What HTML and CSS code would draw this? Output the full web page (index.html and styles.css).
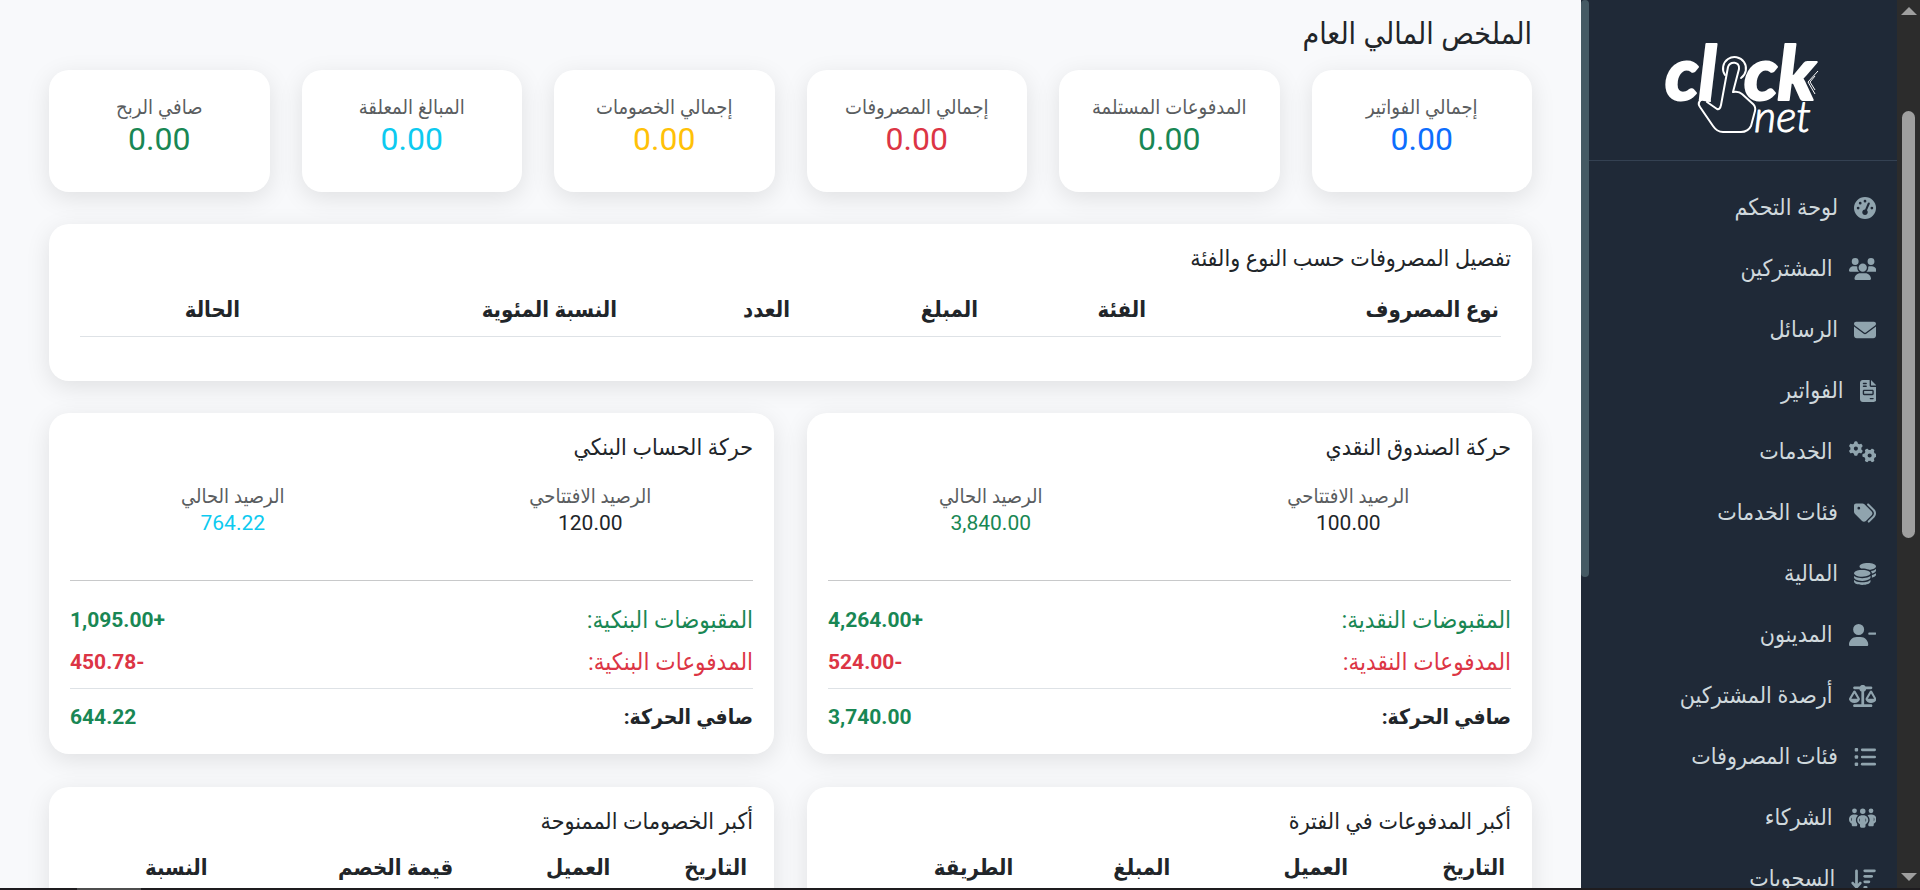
FILE: index.html
```html
<!DOCTYPE html>
<html lang="ar" dir="rtl">
<head>
  <meta charset="UTF-8">
  <meta name="viewport" content="width=device-width, initial-scale=1">
  <title>الملخص المالي العام</title>
  <link rel="stylesheet" href="styles.css">
</head>
<body>
  <div class="layout">
    <div class="page-scroll" aria-hidden="true">
      <svg class="scroll-arrow" viewBox="0 0 16 8"><path d="M8 0l8 8H0z"/></svg>
      <div class="scroll-track"><div class="page-thumb"></div></div>
      <svg class="scroll-arrow" viewBox="0 0 16 8"><path d="M0 0h16L8 8z"/></svg>
    </div>

    <aside class="sidebar">
      <div class="side-content">
        <a href="#" class="logo" aria-label="click net">
          <svg viewBox="0 0 165 105" direction="ltr">
            <text class="logo-bold" x="4" y="65">cl</text>
            <text class="logo-bold" x="83" y="65">ck</text>
            <path class="logo-line" d="M49 66 L43 65 C39 64 36 68 39 72 L52 91 Q56 97 62 97 H80 Q87 97 90 91 L94 76 Q95 72 92 69 L81 59 Q78 56 72 57 L78 34 C79 26 69 26 67 32 L60 70 Q59 75 56 74 L46 67"/>
            <path class="logo-ring" d="M64 40 A11.5 11.5 0 1 1 80 43"/>
            <text class="logo-light" x="93" y="97">net</text>
            <path class="logo-thin" d="M157 36 L147 47 L154 59 M154 41 L149 47 L154 55"/>
          </svg>
        </a>
        <nav class="menu">
          <a href="#"><svg viewBox="0 0 512 512"><path d="M0 256a256 256 0 1 1 512 0A256 256 0 1 1 0 256zM288 96a32 32 0 1 0 -64 0 32 32 0 1 0 64 0zM256 416c35.3 0 64-28.7 64-64c0-17.4-6.9-33.1-18.1-44.6L366 161.7c5.3-12.1-.2-26.3-12.3-31.6s-26.3 .2-31.6 12.3L257.9 288c-.6 0-1.3 0-1.9 0c-35.3 0-64 28.7-64 64s28.7 64 64 64zM176 144a32 32 0 1 0 -64 0 32 32 0 1 0 64 0zM96 288a32 32 0 1 0 0-64 32 32 0 1 0 0 64zm352-32a32 32 0 1 0 -64 0 32 32 0 1 0 64 0z"/></svg>لوحة التحكم</a>
          <a href="#"><svg viewBox="0 0 640 512"><path d="M144 0a80 80 0 1 1 0 160A80 80 0 1 1 144 0zM512 0a80 80 0 1 1 0 160A80 80 0 1 1 512 0zM0 298.7C0 239.8 47.8 192 106.7 192l42.7 0c15.9 0 31 3.5 44.6 9.7c-1.3 7.2-1.9 14.7-1.9 22.3c0 38.2 16.8 72.5 43.3 96c-.2 0-.4 0-.7 0L21.3 320C9.6 320 0 310.4 0 298.7zM405.3 320c-.2 0-.4 0-.7 0c26.6-23.5 43.3-57.8 43.3-96c0-7.6-.7-15-1.9-22.3c13.6-6.3 28.7-9.7 44.6-9.7l42.7 0C592.2 192 640 239.8 640 298.7c0 11.8-9.6 21.3-21.3 21.3l-213.3 0zM224 224a96 96 0 1 1 192 0 96 96 0 1 1 -192 0zM128 485.3C128 411.7 187.7 352 261.3 352l117.3 0C452.3 352 512 411.7 512 485.3c0 14.7-11.9 26.7-26.7 26.7l-330.7 0c-14.7 0-26.7-11.9-26.7-26.7z"/></svg>المشتركين</a>
          <a href="#"><svg viewBox="0 0 512 512"><path d="M48 64C21.5 64 0 85.5 0 112c0 15.1 7.1 29.3 19.2 38.4L236.8 313.6c11.4 8.5 27 8.5 38.4 0L492.8 150.4c12.1-9.1 19.2-23.3 19.2-38.4c0-26.5-21.5-48-48-48L48 64zM0 176L0 384c0 35.3 28.7 64 64 64l384 0c35.3 0 64-28.7 64-64l0-208L294.4 339.2c-22.8 17.1-54 17.1-76.8 0L0 176z"/></svg>الرسائل</a>
          <a href="#"><svg viewBox="0 0 384 512"><path fill-rule="evenodd" d="M64 0C28.7 0 0 28.7 0 64L0 448c0 35.3 28.7 64 64 64l256 0c35.3 0 64-28.7 64-64l0-288-128 0c-17.7 0-32-14.3-32-32L224 0 64 0zM256 0l0 128 128 0L256 0zM80 64l64 0c8.8 0 16 7.2 16 16s-7.2 16-16 16L80 96c-8.8 0-16-7.2-16-16s7.2-16 16-16zm0 64l64 0c8.8 0 16 7.2 16 16s-7.2 16-16 16l-64 0c-8.8 0-16-7.2-16-16s7.2-16 16-16zm16 96l192 0c17.7 0 32 14.3 32 32l0 64c0 17.7-14.3 32-32 32L96 352c-17.7 0-32-14.3-32-32l0-64c0-17.7 14.3-32 32-32zm0 32l0 64 192 0 0-64L96 256zM240 416l64 0c8.8 0 16 7.2 16 16s-7.2 16-16 16l-64 0c-8.8 0-16-7.2-16-16s7.2-16 16-16z"/></svg>الفواتير</a>
          <a href="#"><svg viewBox="0 0 640 512"><path id="gear" d="M308.5 135.3c7.1-6.3 9.9-16.2 6.2-25c-2.3-5.3-4.8-10.5-7.6-15.5L304 89.4c-3-5-6.3-9.9-9.8-14.6c-5.7-7.6-15.7-10.1-24.7-7.1l-28.2 9.3c-10.7-8.8-23-16-36.2-20.9L199 27.1c-1.9-9.3-9.1-16.7-18.5-17.8C173.9 8.4 167.2 8 160.4 8l-.7 0c-6.8 0-13.5 .4-20.1 1.2c-9.4 1.1-16.6 8.6-18.5 17.8L115 56.1c-13.3 5-25.5 12.1-36.2 20.9L50.5 67.8c-9-3-19-.5-24.7 7.1c-3.5 4.7-6.8 9.6-9.9 14.6l-3 5.3c-2.8 5-5.3 10.2-7.6 15.6c-3.7 8.7-.9 18.6 6.2 25l22.2 19.8C32.6 161.9 32 168.9 32 176s.6 14.1 1.7 20.9L11.5 216.7c-7.1 6.3-9.9 16.2-6.2 25c2.3 5.3 4.8 10.5 7.6 15.6l3 5.2c3 5.1 6.3 9.9 9.9 14.6c5.7 7.6 15.7 10.1 24.7 7.1l28.2-9.3c10.7 8.8 23 16 36.2 20.9l6.1 29.1c1.9 9.3 9.1 16.7 18.5 17.8c6.7 .8 13.5 1.2 20.4 1.2s13.7-.4 20.4-1.2c9.4-1.1 16.6-8.6 18.5-17.8l6.1-29.1c13.3-5 25.5-12.1 36.2-20.9l28.2 9.3c9 3 19 .5 24.7-7.1c3.5-4.7 6.8-9.5 9.8-14.6l3.1-5.4c2.8-5 5.3-10.2 7.6-15.5c3.7-8.7 .9-18.6-6.2-25l-22.2-19.8c1.1-6.8 1.7-13.8 1.7-20.9s-.6-14.1-1.7-20.9l22.2-19.8zM112 176a48 48 0 1 1 96 0 48 48 0 1 1 -96 0z"/><use href="#gear" transform="translate(480 336) rotate(90) translate(-160 -176)"/></svg>الخدمات</a>
          <a href="#"><svg viewBox="0 0 512 512"><path d="M345 39.1L472.8 168.4c52.4 53 52.4 138.2 0 191.2L360.8 472.9c-9.3 9.4-24.5 9.5-33.9 .2s-9.5-24.5-.2-33.9L438.6 325.9c33.9-34.3 33.9-89.4 0-123.7L310.9 72.9c-9.3-9.4-9.2-24.6 .2-33.9s24.6-9.2 33.9 .2zM0 229.5L0 80C0 53.5 21.5 32 48 32l149.5 0c17 0 33.3 6.7 45.3 18.7l168 168c25 25 25 65.5 0 90.5L277.3 442.7c-25 25-65.5 25-90.5 0l-168-168C6.7 262.7 0 246.5 0 229.5zM144 144a32 32 0 1 0 -64 0 32 32 0 1 0 64 0z"/></svg>فئات الخدمات</a>
          <a href="#"><svg viewBox="0 0 512 512"><path d="M512 80c0 18-14.3 34.6-38.4 48c-29.1 16.1-72.5 27.5-122.3 30.9c-3.7-1.8-7.4-3.5-11.3-5C300.6 137.4 248.2 128 192 128c-8.3 0-16.4 .2-24.5 .6l-1.1-.6C142.3 114.6 128 98 128 80c0-44.2 86-80 192-80S512 35.8 512 80zM160.7 161.1c10.2-.7 20.7-1.1 31.3-1.1c62.2 0 117.4 12.3 152.5 31.4C369.3 204.9 384 221.7 384 240c0 4-.7 7.9-2.1 11.7c-4.6 13.2-17 25.3-35 35.5c-.1 .1-.3 .1-.4 .2c-.3 .2-.6 .3-.9 .5c-35 19.4-90.8 32-153.6 32c-59.6 0-112.9-11.3-148.2-29.1c-1.9-.9-3.7-1.9-5.5-2.9C14.3 274.6 0 258 0 240c0-34.8 53.4-64.5 128-75.4c10.5-1.5 21.4-2.7 32.7-3.5zM416 240c0-21.9-10.6-39.9-24.1-53.4c28.3-4.4 54.2-11.4 76.2-20.5c16.3-6.8 31.5-15.2 43.9-25.5l0 35.4c0 19.3-16.5 37.1-43.8 50.9c-14.6 7.4-32.4 13.7-52.4 18.5c.1-1.8 .2-3.5 .2-5.3zm-32 96c0 18-14.3 34.6-38.4 48c-1.8 1-3.6 1.9-5.5 2.9C304.9 404.7 251.6 416 192 416c-62.8 0-118.6-12.6-153.6-32C14.3 370.6 0 354 0 336l0-35.4c12.5 10.3 27.6 18.7 43.9 25.5C83.4 342.6 135.8 352 192 352s108.6-9.4 148.1-25.9c7.8-3.2 15.3-6.9 22.4-10.9c6.1-3.4 11.8-7.2 17.2-11.2c1.5-1.1 2.9-2.3 4.3-3.4l0 3.4 0 5.7 0 26.3zm32 0l0-32 0-25.9c19-4.2 36.5-9.5 52.1-16c16.3-6.8 31.5-15.2 43.9-25.5l0 35.4c0 10.5-5 21-14.9 30.9c-16.3 16.3-45 29.7-81.3 38.4c.1-1.7 .2-3.5 .2-5.3zM192 448c56.2 0 108.6-9.4 148.1-25.9c16.3-6.8 31.5-15.2 43.9-25.5l0 35.4c0 44.2-86 80-192 80S0 476.2 0 432l0-35.4c12.5 10.3 27.6 18.7 43.9 25.5C83.4 438.6 135.8 448 192 448z"/></svg>المالية</a>
          <a href="#"><svg viewBox="0 0 640 512"><path d="M96 128a128 128 0 1 1 256 0A128 128 0 1 1 96 128zM0 482.3C0 383.8 79.8 304 178.3 304l91.4 0C368.2 304 448 383.8 448 482.3c0 16.4-13.3 29.7-29.7 29.7L29.7 512C13.3 512 0 498.7 0 482.3zM472 200l144 0c13.3 0 24 10.7 24 24s-10.7 24-24 24l-144 0c-13.3 0-24-10.7-24-24s10.7-24 24-24z"/></svg>المدينون</a>
          <a href="#"><svg viewBox="0 0 640 512"><path d="M384 32l128 0c17.7 0 32 14.3 32 32s-14.3 32-32 32L398.4 96c-5.2 25.8-22.9 47.1-46.4 57.3L352 448l160 0c17.7 0 32 14.3 32 32s-14.3 32-32 32l-192 0-192 0c-17.7 0-32-14.3-32-32s14.3-32 32-32l160 0 0-294.7c-23.5-10.3-41.2-31.6-46.4-57.3L128 96c-17.7 0-32-14.3-32-32s14.3-32 32-32l128 0c14.6-19.4 37.8-32 64-32s49.4 12.6 64 32zm55.6 288l144.9 0L512 195.8 439.6 320zM512 416c-62.9 0-115.2-34-126-78.9c-2.6-11 1-22.3 6.7-32.1l95.2-163.2c5-8.6 14.2-13.8 24.1-13.8s19.1 5.3 24.1 13.8l95.2 163.2c5.7 9.8 9.3 21.1 6.7 32.1C627.2 382 574.9 416 512 416zM126.8 195.8L54.4 320l144.9 0L126.8 195.8zM.9 337.1c-2.6-11 1-22.3 6.7-32.1l95.2-163.2c5-8.6 14.2-13.8 24.1-13.8s19.1 5.3 24.1 13.8l95.2 163.2c5.7 9.8 9.3 21.1 6.7 32.1C242 382 189.7 416 126.8 416S11.7 382 .9 337.1z"/></svg>أرصدة المشتركين</a>
          <a href="#"><svg viewBox="0 0 512 512"><rect x="16" y="48" width="80" height="80" rx="24"/><rect x="16" y="216" width="80" height="80" rx="24"/><rect x="16" y="384" width="80" height="80" rx="24"/><rect x="160" y="60" width="352" height="60" rx="30"/><rect x="160" y="226" width="352" height="60" rx="30"/><rect x="160" y="392" width="352" height="60" rx="30"/></svg>فئات المصروفات</a>
          <a href="#"><svg viewBox="0 0 640 512"><path d="M72 88a56 56 0 1 1 112 0A56 56 0 1 1 72 88zM64 245.7C54 256.9 48 271.8 48 288s6 31.1 16 42.3l0-84.7zm144.4-49.3C178.7 222.7 160 261.2 160 304c0 34.3 12 65.8 32 90.5l0 21.5c0 17.7-14.3 32-32 32l-64 0c-17.7 0-32-14.3-32-32l0-26.8C26.2 371.2 0 332.7 0 288c0-61.9 50.1-112 112-112l32 0c24 0 46.2 7.5 64.4 20.3zM448 416l0-21.5c20-24.7 32-56.2 32-90.5c0-42.8-18.7-81.3-48.4-107.7C449.8 183.5 472 176 496 176l32 0c61.9 0 112 50.1 112 112c0 44.7-26.2 83.2-64 101.2l0 26.8c0 17.7-14.3 32-32 32l-64 0c-17.7 0-32-14.3-32-32zm8-328a56 56 0 1 1 112 0A56 56 0 1 1 456 88zM576 245.7l0 84.7c10-11.3 16-26.1 16-42.3s-6-31.1-16-42.3zM320 32a64 64 0 1 1 0 128 64 64 0 1 1 0-128zM240 304c0 16.2 6 31 16 42.3l0-84.7c-10 11.3-16 26.1-16 42.3zm144-42.3l0 84.7c10-11.3 16-26.1 16-42.3s-6-31.1-16-42.3zM448 304c0 44.7-26.2 83.2-64 101.2l0 42.8c0 17.7-14.3 32-32 32l-64 0c-17.7 0-32-14.3-32-32l0-42.8c-37.8-18-64-56.5-64-101.2c0-61.9 50.1-112 112-112l32 0c61.9 0 112 50.1 112 112z"/></svg>الشركاء</a>
          <a href="#"><svg viewBox="0 0 576 512"><path d="M151.6 469.6C145.5 476.2 137 480 128 480s-17.5-3.8-23.6-10.4l-88-96c-11.9-13-11.1-33.3 2-45.2s33.3-11.1 45.2 2L96 365.7 96 64c0-17.7 14.3-32 32-32s32 14.3 32 32l0 301.7 32.4-35.4c11.9-13 32.2-13.9 45.2-2s13.9 32.2 2 45.2l-88 96z"/><rect x="288" y="32" width="288" height="64" rx="32"/><rect x="288" y="160" width="224" height="64" rx="32"/><rect x="288" y="288" width="160" height="64" rx="32"/><rect x="288" y="416" width="96" height="64" rx="32"/></svg>السحوبات</a>
        </nav>
      </div>
      <div class="side-scroll" aria-hidden="true"><div class="side-thumb"></div></div>
    </aside>

    <main class="content">
      <h3 class="page-title">الملخص المالي العام</h3>

      <section class="stats">
        <div class="card stat"><p class="label">إجمالي الفواتير</p><p class="figure blue">0.00</p></div>
        <div class="card stat"><p class="label">المدفوعات المستلمة</p><p class="figure green">0.00</p></div>
        <div class="card stat"><p class="label">إجمالي المصروفات</p><p class="figure red">0.00</p></div>
        <div class="card stat"><p class="label">إجمالي الخصومات</p><p class="figure yellow">0.00</p></div>
        <div class="card stat"><p class="label">المبالغ المعلقة</p><p class="figure cyan">0.00</p></div>
        <div class="card stat"><p class="label">صافي الربح</p><p class="figure green">0.00</p></div>
      </section>

      <section class="card expenses">
        <h5>تفصيل المصروفات حسب النوع والفئة</h5>
        <div class="table-wrap">
          <table>
            <colgroup><col class="col-type"><col class="col-category"><col class="col-amount"><col class="col-count"><col class="col-percent"><col></colgroup>
            <thead>
              <tr><th>نوع المصروف</th><th>الفئة</th><th>المبلغ</th><th>العدد</th><th>النسبة المئوية</th><th>الحالة</th></tr>
            </thead>
          </table>
        </div>
      </section>

      <section class="two-cols">
        <div class="card">
          <h5>حركة الصندوق النقدي</h5>
          <div class="balances">
            <div><p class="label">الرصيد الافتتاحي</p><p class="amount">100.00</p></div>
            <div><p class="label">الرصيد الحالي</p><p class="amount green">3,840.00</p></div>
          </div>
          <hr>
          <div class="line green"><span>المقبوضات النقدية:</span><b>+4,264.00</b></div>
          <div class="line red"><span>المدفوعات النقدية:</span><b>-524.00</b></div>
          <div class="line total"><b>صافي الحركة:</b><b class="green">3,740.00</b></div>
        </div>
        <div class="card">
          <h5>حركة الحساب البنكي</h5>
          <div class="balances">
            <div><p class="label">الرصيد الافتتاحي</p><p class="amount">120.00</p></div>
            <div><p class="label">الرصيد الحالي</p><p class="amount cyan">764.22</p></div>
          </div>
          <hr>
          <div class="line green"><span>المقبوضات البنكية:</span><b>+1,095.00</b></div>
          <div class="line red"><span>المدفوعات البنكية:</span><b>-450.78</b></div>
          <div class="line total"><b>صافي الحركة:</b><b class="green">644.22</b></div>
        </div>

        <div class="card">
          <h5>أكبر المدفوعات في الفترة</h5>
          <table class="small-table">
            <colgroup><col class="w23"><col class="w26"><col class="w23"><col></colgroup>
            <thead><tr><th>التاريخ</th><th>العميل</th><th>المبلغ</th><th>الطريقة</th></tr></thead>
          </table>
        </div>
        <div class="card">
          <h5>أكبر الخصومات الممنوحة</h5>
          <table class="small-table">
            <colgroup><col class="w20"><col class="w23"><col class="w36"><col></colgroup>
            <thead><tr><th>التاريخ</th><th>العميل</th><th>قيمة الخصم</th><th>النسبة</th></tr></thead>
          </table>
        </div>
      </section>
    </main>
  </div>
  <div class="bottom-edge"><span></span></div>
</body>
</html>
```
FILE: styles.css
```css
* { box-sizing: border-box; }
body { margin: 0; height: 100vh; display: flex; flex-direction: column; overflow: hidden; font-family: "Roboto", "DejaVu Sans Condensed", sans-serif; font-size: 22px; line-height: 32px; color: #212529; background: #f8f9fb; }
h3, h5, p { margin: 0; font-weight: 400; }
.layout { flex: 1; min-height: 0; display: flex; }

/* window scrollbar */
.page-scroll { width: 23px; flex: none; background: #2c2c2c; display: flex; flex-direction: column; align-items: center; padding: 7px 0; }
.scroll-arrow { width: 16px; height: 8px; fill: #9f9f9f; }
.scroll-track { flex: 1; width: 13px; padding: 96px 0 0; }
.page-thumb { height: 56%; border-radius: 7px; background: #9f9f9f; }

/* sidebar */
.sidebar { width: 316px; flex: none; display: flex; overflow: hidden; background: #1f2937; }
.side-content { flex: 1; }
.side-scroll { width: 8px; }
.side-thumb { height: 65%; border-radius: 4px; background: #455a64; }
.logo { display: flex; justify-content: center; padding: 35px 0 20px; border-bottom: 1px solid #344152; }
.logo svg { width: 165px; height: 105px; overflow: visible; }
.logo-bold { font: italic 900 74px "Lato", sans-serif; fill: #fff; stroke: #fff; stroke-width: 2; stroke-linejoin: round; }
.logo-light { font: italic 300 43px "Lato", sans-serif; fill: #fff; stroke: #fff; stroke-width: 1; stroke-linejoin: round; }
.logo-line { fill: #1f2937; stroke: #fff; stroke-width: 2; stroke-linecap: round; stroke-linejoin: round; }
.logo-ring { fill: none; stroke: #fff; stroke-width: 2; stroke-linecap: round; }
.logo-thin { fill: none; stroke: #fff; stroke-width: 1; }
.menu { padding: 16px 21px; }
.menu a { display: flex; align-items: center; gap: 16px; height: 61px; font-size: 23px; color: #cfd8dc; text-decoration: none; }
.menu svg { height: 22px; fill: #90a4ae; }

/* content */
.content { flex: 1; min-width: 0; overflow: hidden; padding: 14px 49px; }
.page-title { font-size: 30px; line-height: 40px; margin-bottom: 16px; }
.card { background: #fff; border-radius: 20px; padding: 19px 21px 21px; box-shadow: 0 6px 24px rgba(0,0,0,0.1); }
.card h5 { font-size: 23px; }
.stats { display: grid; grid-template-columns: repeat(6, 1fr); gap: 32px; margin-bottom: 32px; }
.stat { min-height: 122px; padding-top: 21px; text-align: center; }
.label { font-size: 20px; color: #5a5d60; }
.figure { font-size: 32px; }
.expenses { min-height: 157px; margin-bottom: 32px; }
.table-wrap { padding: 9px 10px; }
table { width: 100%; table-layout: fixed; border-collapse: collapse; }
th { text-align: right; padding: 10px 2px; border-bottom: 1px solid #dee2e6; font-weight: 700; }
.small-table th { padding: 14px 6px; }
.col-type { width: 353px; }
.col-category { width: 168px; }
.col-amount { width: 188px; }
.col-count { width: 173px; }
.col-percent { width: 377px; }
.w20 { width: 20%; }
.w23 { width: 23%; }
.w26 { width: 26%; }
.w36 { width: 36%; }

.two-cols { display: grid; grid-template-columns: 1fr 1fr; gap: 33px; }
.balances { display: flex; margin: 19px -16px 0; text-align: center; line-height: 27px; }
.balances div { flex: 1; }
.amount { font-size: 21px; }
hr { margin: 43px 0 23px; border: 0; border-top: 1px solid #c8c9ca; }
.line { display: flex; justify-content: space-between; margin-bottom: 10px; font-size: 24px; }
.line b { font-size: 21px; }
.total { border-top: 1px solid #dee2e6; padding-top: 12px; margin-bottom: 0; }

.blue { color: #0d6efd; }
.green { color: #198754; }
.red { color: #dc3545; }
.yellow { color: #ffc107; }
.cyan { color: #0dcaf0; }

.bottom-edge { height: 2px; flex: none; background: #1e1c1f; direction: ltr; }
.bottom-edge span { display: block; width: 64px; height: 2px; margin-left: 77px; background: #4d4d4d; }
```
